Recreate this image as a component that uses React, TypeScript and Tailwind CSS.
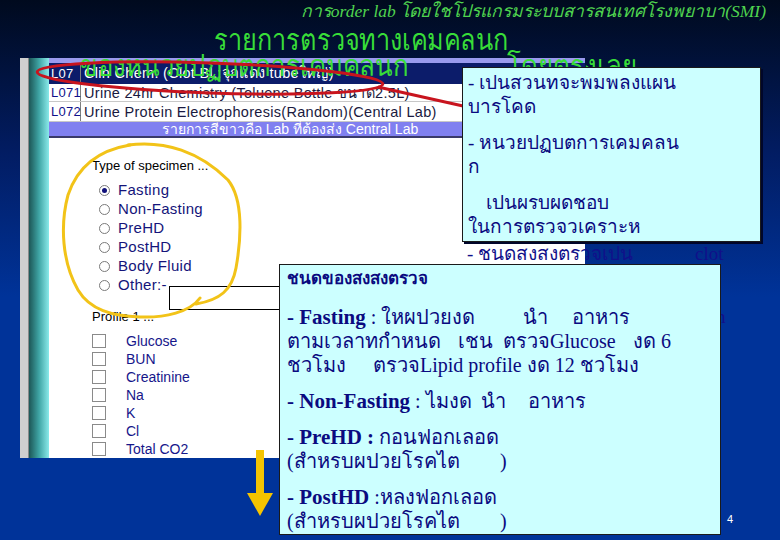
import React from "react";

const radios = ["Fasting", "Non-Fasting", "PreHD", "PostHD", "Body Fluid", "Other:-"];
const tests = ["Glucose", "BUN", "Creatinine", "Na", "K", "Cl", "Total CO2"];

const thai = { fontFamily: '"Liberation Serif", "Noto Sans", "DejaVu Sans", serif' };
const sansThai = { fontFamily: '"Noto Sans", "DejaVu Sans", sans-serif' };

const ScreenshotWindow = () => (
  <div className="flex w-[565px] h-[400px] ml-[20px]">
    <div className="w-[9px] bg-[#cfcfcf] border-r border-[#8a8a8a]" />
    <div className="w-[20px] bg-gradient-to-r from-[#1d5757] via-[#3fa5a5] to-[#8aeaea]" />
    <div className="flex-1 bg-white flex flex-col font-['Liberation_Sans',sans-serif]">
      <div className="h-[5px] bg-[#9a9aee]" />
      <div className="flex h-[21px] bg-[#0c1c6a] text-white text-[14.5px] leading-[21px] tracking-[0.3px]">
        <div className="w-[32px] pl-[2px] text-[13px] border-r border-[#7f7f7f]">L07</div>
        <div className="pl-[3px]">Clin Chem. (Clot Bl.:จุกแดง tubeใหญ่)</div>
      </div>
      <div className="flex h-[18px] text-[14.5px] leading-[18px] tracking-[0.3px] border-b border-[#c8c8c8]">
        <div className="w-[32px] pl-[2px] text-[13px] text-[#10108a] border-r border-[#7f7f7f]">L071</div>
        <div className="pl-[3px] text-[#1a1a40]">Urine 24hr Chemistry (Toluene Bottle ขนาด2.5L)</div>
      </div>
      <div className="flex h-[20px] text-[14.5px] leading-[20px] tracking-[0.3px] border-b border-[#c8c8c8]">
        <div className="w-[32px] pl-[2px] text-[13px] text-[#10108a] border-r border-[#7f7f7f]">L072</div>
        <div className="pl-[3px] text-[#1a1a40]">Urine Protein Electrophoresis(Random)(Central Lab)</div>
      </div>
      <div className="h-[16px] w-[482px] bg-[#8080f0] border-b-2 border-[#3a3a6a] text-white text-[14px] leading-[14px] text-center">
        รายการสีขาวคือ Lab ที่ต้องส่ง Central Lab
      </div>
      <div className="flex flex-col pl-[43px] pt-[20px]">
        <div className="text-[13px] text-black leading-[16px]">Type of specimen ...</div>
        <div className="flex flex-col pt-[7px] pl-[7px]">
          {radios.map((r, i) => (
            <div key={r} className="relative flex items-center h-[19px] gap-[8px]">
              <div className="w-[11px] h-[11px] rounded-full border border-[#7a7a7a] bg-white flex items-center justify-center">
                {i === 0 && <div className="w-[5px] h-[5px] rounded-full bg-[#10107a]" />}
              </div>
              <span className="text-[15px] font-medium text-[#14147a] tracking-[0.3px]">{r}</span>
              {i === radios.length - 1 && (
                <div className="absolute left-[70px] top-[10px] w-[180px] h-[24px] border-t border-l border-b border-black" />
              )}
            </div>
          ))}
        </div>
        <div className="text-[13px] text-black leading-[16px] mt-[14px]">Profile 1 ...</div>
        <div className="flex flex-col pt-[7px]">
          {tests.map((t) => (
            <div key={t} className="flex items-center h-[18px] gap-[20px]">
              <div className="w-[14px] h-[14px] border border-[#8a8a8a] bg-white" />
              <span className="text-[14px] text-[#16168a]">{t}</span>
            </div>
          ))}
        </div>
      </div>
    </div>
  </div>
);

export default function App() {
  return (
    <div className="relative w-[780px] h-[540px] overflow-hidden bg-[linear-gradient(to_bottom,#000a1e_0%,#021c62_28%,#003399_55%,#003399_100%)]">
      <div className="flex flex-col">
        <div className="h-[22px] pr-[14px] text-right italic text-[17.5px] leading-[22px] text-[#4fd44f]" style={thai}>
          การorder lab โดยใชโปรแกรมระบบสารสนเทศโรงพยาบา(SMI)
        </div>
        <div className="h-[36px] pl-[214px]">
          <div className="origin-left scale-x-[0.87] text-[29px] leading-[34px] text-[#38dd38] whitespace-nowrap" style={sansThai}>
            รายการตรวจทางเคมคลนก
          </div>
        </div>
        <ScreenshotWindow />
      </div>

      {/* title line 2, lying over the screenshot */}
      <div
        className="absolute left-[80px] top-[48px] origin-left scale-x-[0.89] text-[29px] leading-[34px] text-[#38dd38] whitespace-nowrap"
        style={sansThai}
      >
        ของหนวยปฏบตการเคมคลนก
      </div>
      <div
        className="absolute left-[507px] top-[48px] origin-left scale-x-[0.89] text-[29px] leading-[34px] text-[#38dd38] whitespace-nowrap"
        style={sansThai}
      >
        โดยตรงเลย
      </div>

      {/* text box hidden under the callouts */}
      <div className="absolute left-[440px] top-[242px] w-[145px] h-[24px] bg-white" />
      <div className="absolute left-[467px] top-[243px] text-[19px] leading-[22px] text-[#10108a] whitespace-nowrap" style={thai}>
        - ชนดสงสงตรวจเปน<span className="ml-[62px]">clot</span>
      </div>
      <div className="absolute left-[716px] top-[306px] text-[19px] leading-[22px] text-[#10108a]" style={thai}>
        h
      </div>

      {/* annotations */}
      <svg className="absolute inset-0 pointer-events-none" width="780" height="540" viewBox="0 0 780 540">
        <ellipse cx="210" cy="78" rx="173" ry="15" fill="none" stroke="#c8141e" strokeWidth="3" transform="rotate(2 210 78)" />
        <line x1="378" y1="87" x2="463" y2="106" stroke="#c8141e" strokeWidth="3" />
        <path
          d="M128 145 C165 140 200 152 228 180 C244 200 241 240 236 268 C232 290 220 300 196 304"
          fill="none"
          stroke="#f2c318"
          strokeWidth="3"
          strokeLinecap="round"
        />
        <path
          d="M200 298 C190 312 165 318 140 317 C112 316 90 310 78 290 C62 262 60 225 68 195 C78 165 100 150 130 145"
          fill="none"
          stroke="#f2c318"
          strokeWidth="3"
          strokeLinecap="round"
        />
        <rect x="256" y="450" width="8" height="44" fill="#f5c400" />
        <polygon points="247,493 273,493 260,516" fill="#f5c400" />
      </svg>

      {/* callout 1 */}
      <div
        className="absolute left-[462px] top-[67px] w-[299px] h-[175px] bg-[#ccffff] border border-[#1a1a1a] shadow-[2px_2px_0_#00062a] px-[5px] pt-[3px] text-[#0a0a80] text-[19px] leading-[24px]"
        style={thai}
      >
        <p>- เปนสวนทจะพมพลงแผน</p>
        <p>บารโคด</p>
        <p className="mt-[12px]">- หนวยปฏบตการเคมคลน</p>
        <p>ก</p>
        <p className="mt-[12px] pl-[18px]">เปนผรบผดชอบ</p>
        <p>ในการตรวจวเคราะห</p>
      </div>

      {/* callout 2 */}
      <div
        className="absolute left-[279px] top-[264px] w-[442px] h-[271px] bg-[#ccffff] border border-[#1a1a1a] px-[7px] pt-[2px] text-[#0a0a80] text-[20px] leading-[24px] whitespace-nowrap"
        style={thai}
      >
        <p className="font-bold text-[17px]">ชนดของสงสงตรวจ</p>
        <p className="mt-[14px]">
          <span className="inline-block w-[236px]">
            <b className="text-[21px]">- Fasting</b> : ใหผปวยงด
          </span>
          <span className="inline-block w-[49px]">นำ</span>
          <span>อาหาร</span>
        </p>
        <p>
          <span className="inline-block w-[171px]">ตามเวลาทกำหนด</span>
          <span className="inline-block w-[45px]">เชน</span>
          <span className="inline-block w-[130px]">ตรวจGlucose</span>
          <span>งด 6</span>
        </p>
        <p>
          <span className="inline-block w-[86px]">ชวโมง</span>
          <span>ตรวจLipid profile งด 12 ชวโมง</span>
        </p>
        <p className="mt-[12px]">
          <span className="inline-block w-[194px]">
            <b className="text-[21px]">- Non-Fasting</b> : ไมงด
          </span>
          <span className="inline-block w-[47px]">นำ</span>
          <span>อาหาร</span>
        </p>
        <p className="mt-[12px]">
          <b className="text-[21px]">- PreHD :</b> กอนฟอกเลอด
        </p>
        <p>
          <span className="inline-block w-[213px]">(สำหรบผปวยโรคไต</span>
          <span>)</span>
        </p>
        <p className="mt-[12px]">
          <b className="text-[21px]">- PostHD</b> :หลงฟอกเลอด
        </p>
        <p>
          <span className="inline-block w-[213px]">(สำหรบผปวยโรคไต</span>
          <span>)</span>
        </p>
      </div>

      <div className="absolute left-[727px] top-[511px] text-[11px] text-white font-['Liberation_Sans',sans-serif]">4</div>
    </div>
  );
}
